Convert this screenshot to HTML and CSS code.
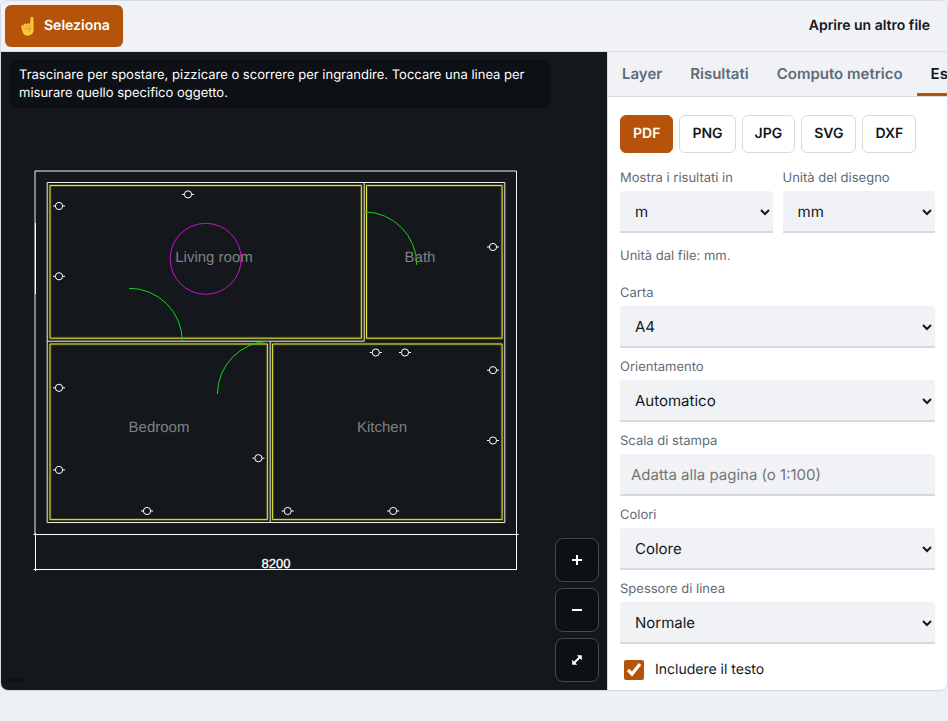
FILE: index.html
```html
<!DOCTYPE html>
<html lang="it">
<head>
<meta charset="utf-8">
<meta name="viewport" content="width=device-width, initial-scale=1">
<title>Visualizzatore DXF</title>
<link rel="stylesheet" href="styles.css">
</head>
<body>
<main class="app">
  <header class="toolbar">
    <button class="tool tool-active" type="button">
      <svg class="tool-icon" viewBox="0 0 20 20" aria-hidden="true">
        <path fill="#fcc83a" d="M11.4 8 11.9 2.2Q12 .7 13.3.7 14.7.7 14.7 2.2L14.8 11.5Q15.6 14.8 13.6 17 11.6 19 8.8 18.7 5.6 18.6 4.5 15.5L3.1 10.4Q2.9 8.7 4.2 8.4 4.9 8.4 5.3 9 5.4 7.5 6.7 7.2 7.7 7.2 8.2 8 8.6 7 9.7 7 10.8 7 11.4 8Z"/>
        <path fill="none" stroke="#d98f1c" stroke-width=".7" stroke-linecap="round" d="M5.4 9.2 6.1 12M8.3 8.2 8.7 11.2M11.4 8.2 11.2 10.8M7 12.8Q10 11 12.8 12.2 10.3 13 9.8 15.2"/>
      </svg>
      Seleziona
    </button>
    <button class="tool tool-plain" type="button">Aprire un altro file</button>
  </header>

  <div class="workspace">
    <section class="viewer" aria-label="Disegno">
      <svg class="drawing" viewBox="1 52 606 638" role="img" aria-label="Pianta">
        <defs>
          <g id="socket"><circle r="3.6"/><path d="M-6 0H-3.6M3.6 0H6"/></g>
          <path id="rooms" d="M50 185.5H361.4V338.2H50ZM366.5 185.5H502.1V338.2H366.5ZM50 344H267.4V519.6H50ZM272.6 344H502.1V519.6H272.6Z"/>
        </defs>
        <g class="wall">
          <path d="M35 534.3V171H516.5V534.3"/>
          <path d="M47.2 182.5H504.8V522.5H47.2ZM47.2 341.2H364.2V182.5M270.2 341.2V522.5"/>
        </g>
        <use class="room-halo" href="#rooms"/>
        <use class="room-edge" href="#rooms"/>
        <g class="dimension">
          <path d="M35.5 223V294M33.5 534.5H518.5M33.5 569.5H517M35.5 533V571M516.5 533V570"/>
        </g>
        <g class="door">
          <path d="M129 288.3A53 53 0 0 1 182.3 341.2M364 211.8A53 53 0 0 1 416.8 265M270.2 341.2A53 53 0 0 0 217.4 394"/>
        </g>
        <circle class="table" cx="205.7" cy="258.8" r="35.5"/>
        <g class="sockets">
          <use href="#socket" x="59" y="206"/>
          <use href="#socket" x="188" y="194.4"/>
          <use href="#socket" x="59" y="276.3"/>
          <use href="#socket" x="493" y="247"/>
          <use href="#socket" x="375.8" y="352.5"/>
          <use href="#socket" x="405" y="352.5"/>
          <use href="#socket" x="493" y="370.2"/>
          <use href="#socket" x="493" y="440.5"/>
          <use href="#socket" x="59" y="387.8"/>
          <use href="#socket" x="59" y="469.9"/>
          <use href="#socket" x="258.4" y="458.2"/>
          <use href="#socket" x="147" y="511"/>
          <use href="#socket" x="287.7" y="511"/>
          <use href="#socket" x="393.2" y="511"/>
        </g>
        <g class="room-name">
          <text x="214" y="262">Living room</text>
          <text x="420" y="262">Bath</text>
          <text x="159" y="432">Bedroom</text>
          <text x="382" y="432">Kitchen</text>
        </g>
        <text class="measure" x="276" y="568">8200</text>
      </svg>
      <p class="hint">Trascinare per spostare, pizzicare o scorrere per ingrandire. Toccare una linea per misurare quello specifico oggetto.</p>
      <div class="coords"></div>
      <div class="zoom">
        <button type="button" aria-label="Ingrandisci"><svg viewBox="0 0 12 12"><path d="M6 1V11M1 6H11"/></svg></button>
        <button type="button" aria-label="Riduci"><svg viewBox="0 0 12 12"><path d="M1 6H11"/></svg></button>
        <button type="button" aria-label="Adatta"><svg viewBox="0 0 12 12"><path class="thin" d="M3 9 9 3"/><path class="head" d="M5.8 1.2H10.8V6.2ZM1.2 5.8V10.8H6.2Z"/></svg></button>
      </div>
    </section>

    <aside class="panel">
      <nav class="tabs">
        <button type="button">Layer</button>
        <button type="button">Risultati</button>
        <button type="button">Computo metrico</button>
        <button type="button" class="current">Esporta</button>
      </nav>
      <form class="export">
        <div class="formats">
          <button type="button" class="chosen">PDF</button>
          <button type="button">PNG</button>
          <button type="button">JPG</button>
          <button type="button">SVG</button>
          <button type="button">DXF</button>
        </div>
        <div class="pair">
          <div class="field">
            <label for="result-unit">Mostra i risultati in</label>
            <select id="result-unit"><option>m</option></select>
          </div>
          <div class="field">
            <label for="drawing-unit">Unità del disegno</label>
            <select id="drawing-unit"><option>mm</option></select>
          </div>
        </div>
        <p class="note">Unità dal file: mm.</p>
        <div class="field">
          <label for="paper">Carta</label>
          <select id="paper"><option>A4</option></select>
        </div>
        <div class="field">
          <label for="orientation">Orientamento</label>
          <select id="orientation"><option>Automatico</option></select>
        </div>
        <div class="field">
          <label for="scale">Scala di stampa</label>
          <input id="scale" type="text" placeholder="Adatta alla pagina (o 1:100)">
        </div>
        <div class="field">
          <label for="colors">Colori</label>
          <select id="colors"><option>Colore</option></select>
        </div>
        <div class="field">
          <label for="weight">Spessore di linea</label>
          <select id="weight"><option>Normale</option></select>
        </div>
        <label class="check"><input type="checkbox" checked>Includere il testo</label>
      </form>
    </aside>
  </div>
</main>
</body>
</html>
```
FILE: styles.css
```css
* { box-sizing: border-box; }

body {
  margin: 0;
  background: #edf0f4;
  color: #14181d;
  font: 15px/20px Inter, "Liberation Sans", sans-serif;
  text-rendering: geometricPrecision;
}

button, input, select { font: inherit; color: inherit; text-rendering: inherit; }
button { cursor: pointer; }

.app {
  border: 1px solid #d5d9e0;
  border-radius: 8px;
  background: #fff;
  overflow: hidden;
}

.toolbar {
  display: flex;
  justify-content: space-between;
  padding: 4px;
  background: #f1f2f6;
  border-bottom: 1px solid #d5d9e0;
}

.tool {
  display: flex;
  align-items: center;
  gap: 5px;
  height: 42px;
  padding: 0 13px;
  border: 0;
  border-radius: 6px;
  background: none;
  font-size: 14px;
  font-weight: 600;
}
.tool-active { background: #b45309; color: #fff; }
.tool-icon { width: 21px; height: 21px; }

.workspace {
  display: grid;
  grid-template-columns: minmax(0, 1fr) 340px;
}

.viewer { position: relative; background: #14181d; }
.drawing { position: absolute; inset: 0; width: 100%; height: 100%; fill: none; }
.wall { stroke: #f0f0f0; }
.room-edge { stroke: #e6e632; }
.room-halo { stroke: #ff0; stroke-width: 3; opacity: .15; }
.dimension { stroke: #fff; }
.door { stroke: #12d812; }
.table { stroke: #cc14cc; }
.sockets { stroke: #fff; }
.room-name, .measure {
  font-family: "Liberation Sans", Arial, sans-serif;
  text-anchor: middle;
}
.room-name { fill: #808080; font-size: 15px; }
.measure { fill: #fff; stroke: #fff; stroke-width: .3; font-size: 13px; }

.hint {
  position: absolute;
  top: 8px;
  left: 8px;
  right: 56px;
  margin: 0;
  padding: 6px 10px;
  border-radius: 6px;
  background: #0d1014;
  color: #fff;
  font-size: 13px;
  line-height: 18px;
}
.coords {
  position: absolute;
  left: 8px;
  bottom: 8px;
  width: 16px;
  height: 4px;
  border-radius: 2px;
  background: #0d1014;
}
.zoom {
  position: absolute;
  right: 8px;
  bottom: 8px;
  display: grid;
  gap: 6px;
}
.zoom button {
  display: grid;
  place-items: center;
  width: 44px;
  height: 44px;
  padding: 0;
  border: 1px solid #45484d;
  border-radius: 8px;
  background: #0d1014;
}
.zoom svg { width: 12px; height: 12px; stroke: #fff; stroke-width: 2; fill: none; }
.zoom .thin { stroke-width: 2; }
.zoom .head { fill: #fff; stroke: none; }

.panel { min-width: 0; border-left: 1px solid #d5d9e0; }
.tabs {
  display: flex;
  height: 45px;
  overflow: hidden;
  background: #f1f2f6;
  border-bottom: 1px solid #d5d9e0;
}
.tabs button {
  flex: none;
  padding: 3px 14px 0;
  border: 0;
  border-bottom: 3px solid transparent;
  background: none;
  color: #5f6b76;
  font-weight: 600;
}
.tabs .current { border-color: #b45309; color: #14181d; }

.export { padding: 18px 12px 10px; }
.formats { display: flex; gap: 6px; margin-bottom: 16px; }
.formats button {
  height: 38px;
  padding: 0 12px;
  border: 1px solid #d5d9e0;
  border-radius: 6px;
  background: #fff;
  font-size: 14px;
  font-weight: 600;
}
.formats .chosen { border-color: #b45309; background: #b45309; color: #fff; }

.pair { display: grid; grid-template-columns: 1fr 1fr; gap: 10px; }
.field { display: grid; gap: 4px; margin-bottom: 10px; }
.field label, .note { color: #5f6b76; font-size: 13px; line-height: 18px; }
.note { margin: 4px 0 19px; }
.field select, .field input {
  width: 100%;
  height: 42px;
  padding: 0 11px;
  border: 0;
  border-bottom: 2px solid #d5d9e0;
  border-radius: 4px 4px 0 0;
  background: #f1f2f6;
}
.field select { padding-right: 0; }
.field input::placeholder { color: #757575; }

.check {
  display: flex;
  align-items: center;
  gap: 11px;
  padding: 6px 4px 0;
  font-size: 14px;
}
.check input { width: 20px; height: 20px; margin: 0; accent-color: #b45309; }
```
